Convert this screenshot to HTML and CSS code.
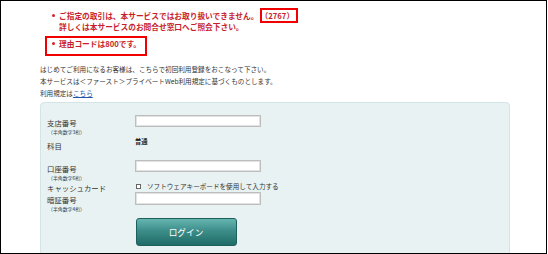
FILE: index.html
```html
<!DOCTYPE html>
<html lang="ja">
<head>
    <meta charset="UTF-8">
    <title>ログイン</title>
    <link rel="stylesheet" href="styles.css">
</head>
<body>
    <div class="frame">
        <div class="notice">
            <ul class="msg-list">
                <li>ご指定の取引は、本サービスではお取り扱いできません。<span class="code">（2767）</span><br>詳しくは本サービスのお問合せ窓口へご照会下さい。</li>
            </ul>
            <div class="reason-box">
                <ul class="msg-list">
                    <li>理由コードは800です。</li>
                </ul>
            </div>
        </div>

        <div class="content">
            <div class="intro">
                <p>はじめてご利用になるお客様は、こちらで初回利用登録をおこなって下さい。</p>
                <p>本サービスは＜ファースト＞プライベートWeb利用規定に基づくものとします。</p>
                <p>利用規定は<a href="#">こちら</a></p>
            </div>

            <div class="login-panel">
                <form class="login-form">
                    <div class="row row-branch">
                        <div class="label">
                            <span class="label-main">支店番号</span>
                            <span class="label-sub">（半角数字3桁）</span>
                        </div>
                        <div class="field">
                            <input type="text" class="text-input">
                        </div>
                    </div>

                    <div class="row row-type">
                        <div class="label">
                            <span class="label-main">科目</span>
                        </div>
                        <div class="field">
                            <span class="type-value">普通</span>
                        </div>
                    </div>

                    <div class="row row-account">
                        <div class="label">
                            <span class="label-main">口座番号</span>
                            <span class="label-sub">（半角数字6桁）</span>
                        </div>
                        <div class="field">
                            <input type="text" class="text-input">
                        </div>
                    </div>

                    <div class="row row-pin">
                        <div class="label">
                            <span class="label-main">キャッシュカード</span>
                            <span class="label-main">暗証番号</span>
                            <span class="label-sub">（半角数字4桁）</span>
                        </div>
                        <div class="field">
                            <label class="soft-kb"><span class="check-box"></span>ソフトウェアキーボードを使用して入力する</label>
                            <input type="password" class="text-input pin-input">
                        </div>
                    </div>

                    <div class="row-submit">
                        <button type="submit" class="login-btn">ログイン</button>
                    </div>
                </form>
            </div>
        </div>
    </div>
</body>
</html>
```

FILE: styles.css
```css
* {
    margin: 0;
    padding: 0;
    box-sizing: border-box;
}

body {
    font-family: 'Noto Sans CJK JP', 'Noto Sans', sans-serif;
    background: #ffffff;
    color: #333333;
}

/* Outer frame */
.frame {
    width: 547px;
    height: 254px;
    border: 1px solid #000000;
    overflow: hidden;
    background: #ffffff;
}

/* Error messages */
.notice {
    padding: 8.5px 0 0 44px;
    color: #c81e2c;
    font-size: 7.7px;
    font-weight: 700;
}

.msg-list {
    list-style: none;
}

.notice > .msg-list {
    margin-left: 7px;
}

.msg-list li {
    position: relative;
    padding-left: 7px;
    line-height: 11px;
}

.msg-list li::before {
    content: '';
    position: absolute;
    left: 0;
    top: 4px;
    width: 3px;
    height: 3px;
    border-radius: 50%;
    background: #d42030;
}

.code {
    border: 2px solid #f00000;
    padding: 0 2px;
    margin-left: 2px;
}

.reason-box {
    display: inline-block;
    margin-top: 4.5px;
    border: 2px solid #f00000;
    padding: 0 4px 5px 5px;
}

/* Intro text */
.content {
    margin-left: 39px;
}

.intro {
    margin-top: 7px;
    font-size: 6.6px;
    line-height: 12px;
    color: #333333;
}

.intro a {
    color: #2255aa;
    text-decoration: underline;
}

/* Login panel */
.login-panel {
    margin-top: 3px;
    width: 470px;
    height: 170px;
    background: #e8f2f2;
    border: 1px solid #d2e4e4;
    border-radius: 4px;
    padding: 12px 0 0 6px;
}

.row {
    display: flex;
    align-items: flex-start;
}

.label {
    width: 88px;
    display: flex;
    flex-direction: column;
    font-size: 7.4px;
    color: #333333;
}

.label-main {
    line-height: 11px;
}

.label-sub {
    font-size: 4.9px;
    line-height: 7px;
    padding-left: 1px;
}

.field {
    display: flex;
    flex-direction: column;
    align-items: flex-start;
}

.text-input {
    width: 126px;
    height: 12px;
    background: #ffffff;
    border: 1px solid #bdbdbd;
    box-shadow: inset 0 0 0 1px #e2e2e2;
}

.row-branch .label {
    margin-top: 1.5px;
}

.row-type {
    margin-top: 1.5px;
}

.row-type .label {
    margin-top: 3.5px;
}

.type-value {
    font-size: 6.3px;
    font-weight: 700;
    line-height: 11px;
    color: #1a1a1a;
}

.row-account {
    margin-top: 9.5px;
}

.row-account .label {
    margin-top: 2.5px;
}

.row-pin .label {
    margin-top: 1.5px;
}

.row-pin .label-main {
    line-height: 12px;
}

.row-pin .label-sub {
    line-height: 6px;
}

.soft-kb {
    display: flex;
    align-items: center;
    font-size: 6.6px;
    line-height: 11px;
    color: #333333;
}

.check-box {
    width: 5px;
    height: 5px;
    border: 1px solid #666666;
    background: #ffffff;
    margin: 0 6px 0 1px;
}

.pin-input {
    margin-top: 0.5px;
    height: 13px;
}

/* Login button */
.row-submit {
    padding-left: 88.5px;
    margin-top: 4.5px;
}

.login-btn {
    width: 101px;
    height: 28px;
    border: 1px solid #1c5f5c;
    border-radius: 3px;
    background: linear-gradient(to bottom, #66b5b1 0%, #3d8e8a 45%, #1f6b67 100%);
    color: #ffffff;
    font-family: 'Noto Sans CJK JP', 'Noto Sans', sans-serif;
    font-size: 8.7px;
    cursor: pointer;
}
```
